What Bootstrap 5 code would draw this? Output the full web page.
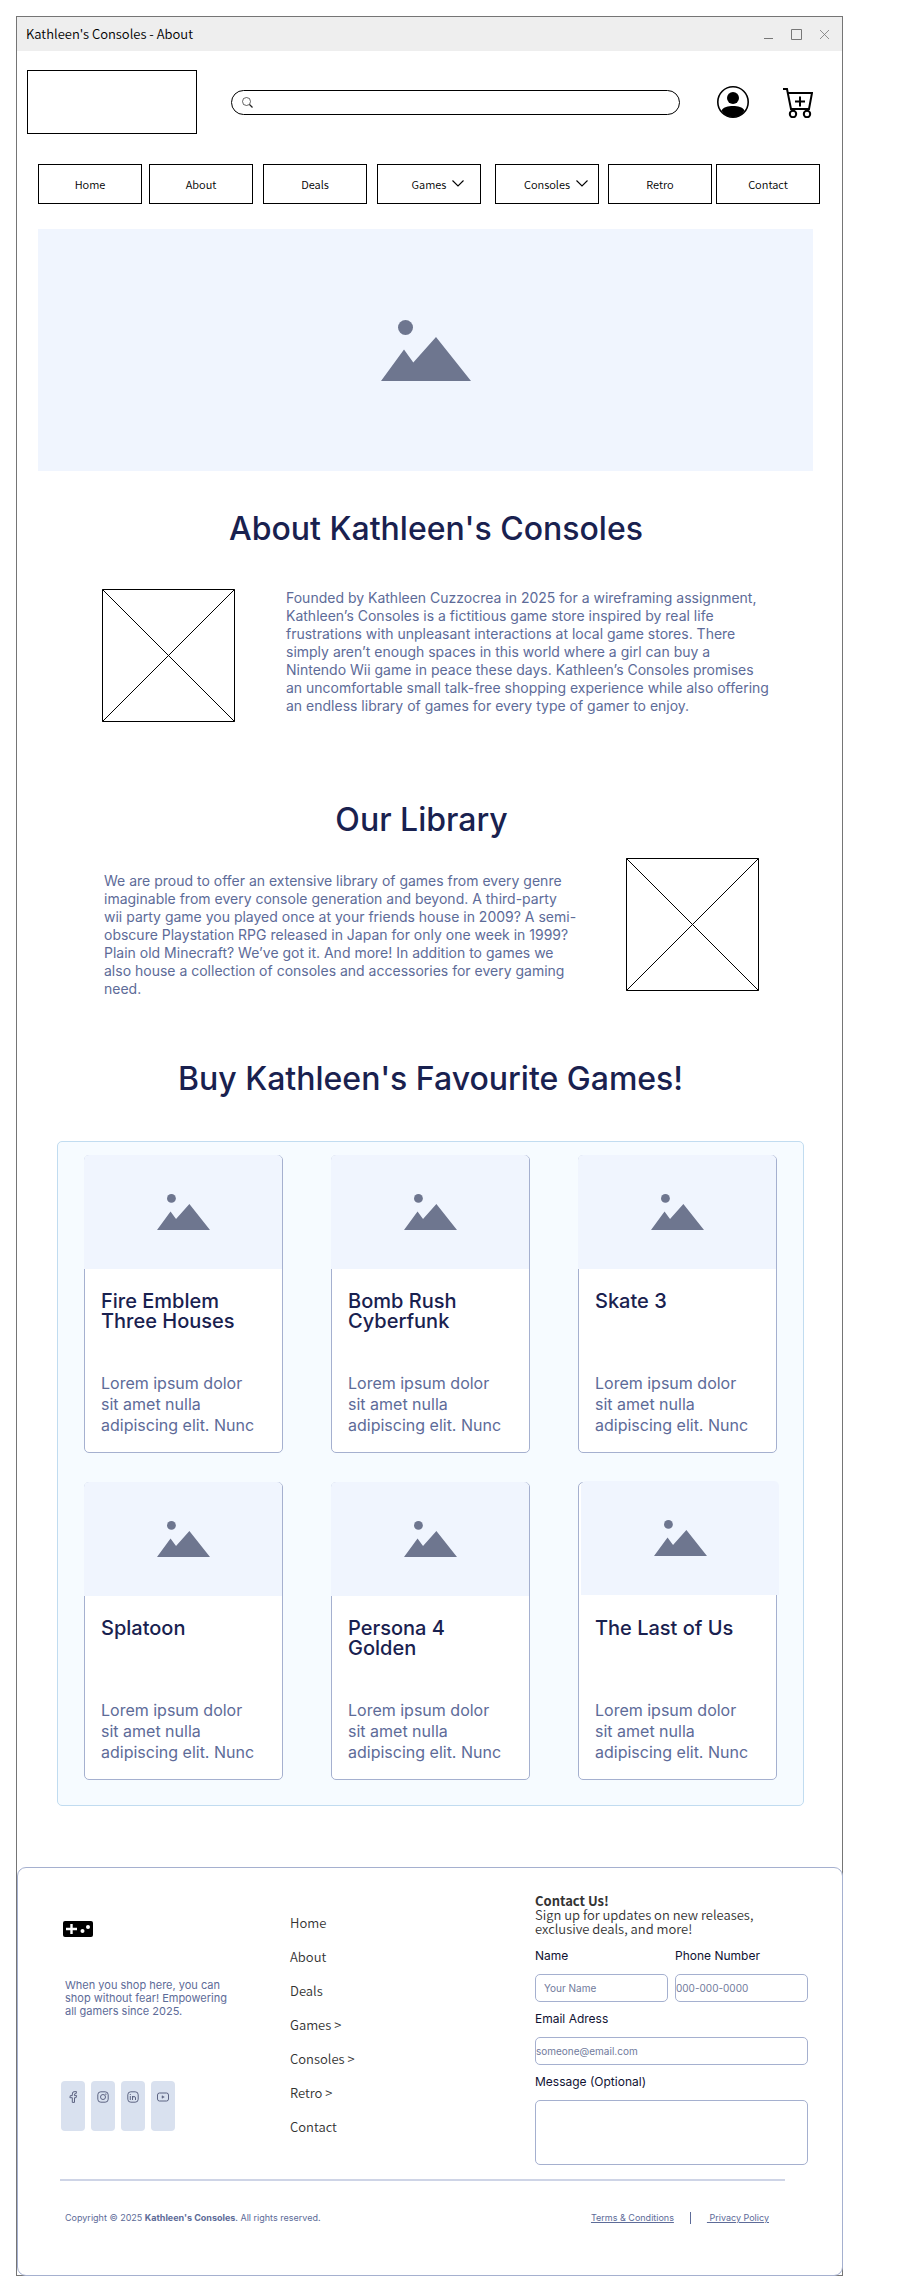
<!DOCTYPE html>
<html lang="en">
<head>
<meta charset="utf-8">
<meta name="viewport" content="width=device-width, initial-scale=1">
<title>Kathleen's Consoles - About</title>
<link rel="stylesheet" href="https://cdn.jsdelivr.net/npm/bootstrap@5.3.0/dist/css/bootstrap.min.css">
<style>
  :root { --navy: #19214f; --slate: #5d6b98; --line: #a5b0cf; --tint: #f0f5fe; }
  body { font-family: Inter, sans-serif; color: var(--slate); background: #fff; padding: 16px 55px 15px 16px; }
  .ui-font { font-family: "Noto Sans CJK JP", sans-serif; font-weight: 350; color: #000; }

  .site-window { border: 1px solid #757575; }
  .title-bar { height: 34px; background: #eee; padding: 0 13px 0 9px; font-size: 13px; line-height: 34px; }
  .window-buttons { gap: 18px; }
  .window-buttons button { line-height: 0; }

  .site-header { padding: 19px 29px 0 10px; }
  .logo-box { width: 170px; height: 64px; border: 1px solid #000; margin-right: 34px; }
  .search-box { height: 25px; border: 1px solid #000; border-radius: 13px; padding: 0 10px; margin-right: 37px; }
  .search-box input { font-size: 12px; outline: 0; margin-left: 6px; }
  .account-link { margin-right: 34px; }

  .main-nav { display: grid; grid-template-columns: 111fr 114fr 114fr 118fr 113fr 108fr 104fr; padding: 30px 22px 0 21px; }
  .main-nav a, .main-nav button { width: 104px; height: 40px; border: 1px solid #000; background: #fff; color: #000; font-size: 11px; font-weight: inherit; line-height: 38px; padding: 0; text-align: center; text-decoration: none; }
  .chevron { left: 100%; top: 50%; margin: -4px 0 0 6px; }

  .hero { height: 242px; margin: 25px 29px 0 21px; background: var(--tint); }
  h2 { color: var(--navy); font-size: 32px; line-height: 38px; font-weight: 500; text-align: center; margin: 0; }
  .prose { font-size: 14px; line-height: 18px; margin: 0; }
  .thumb { width: 133px; height: 133px; }

  .about-section { padding: 39px 59px 0 72px; }
  .about-row { padding: 41px 11px 0 13px; gap: 51px; }
  .library-section { padding: 79px 83px 0 67px; }
  .library-row { padding: 19px 0 0 20px; }
  .library-row .prose { max-width: 474px; margin-top: 14px; }
  .games-section { padding: 62px 38px 0 40px; }
  .games-panel { border: 1px solid #c1dcf0; border-radius: 5px; background: #f6fbff; padding: 13px 26px 25px; margin-top: 43px; }
  .games-panel .row { --bs-gutter-x: 48px; --bs-gutter-y: 29px; }
  .game-card { border: 1px solid var(--line); border-radius: 5px; height: 298px; }
  .game-art { height: 114px; margin: -1px 0 0 -1px; background: var(--tint); border-radius: 5px 5px 0 0; flex: none; }
  .game-art-shifted { margin: -2px -3px 1px 2px; }
  .game-body { padding: 22px 16px 0; }
  .game-body h3 { color: var(--navy); font-size: 20px; line-height: 20px; font-weight: 500; height: 82px; margin: 0; }
  .game-body p { font-size: 16px; line-height: 21px; height: 63px; overflow: hidden; margin: 0; }

  .site-footer { border: 1px solid var(--line); border-radius: 9px; background: #fff; margin: 61px -1px -1px 0; padding: 26px 34px 51px 43px; }
  .footer-grid { display: grid; grid-template-columns: 229fr 245fr 273fr; }
  .pad-logo { margin: 24px 0 0 2px; }
  .tagline { font-size: 11px; line-height: 13px; margin: 39px 0 0 4px; }
  .socials { gap: 6px; margin-top: 63px; }
  .socials a { width: 24px; height: 50px; border-radius: 4px; background: #d9e1ef; padding-top: 10px; text-align: center; line-height: 0; }
  .footer-links { padding-top: 12px; }
  .footer-links a { display: block; font-size: 13px; line-height: 34px; color: #333; text-decoration: none; }
  .contact-intro { color: #333; font-size: 13px; line-height: 14px; margin: 0 0 13px; }
  .contact-form label { display: block; color: #101233; font-size: 12px; line-height: 14px; margin-bottom: 11px; }
  .contact-form .wide-label { margin-top: 10px; }
  .name-row { gap: 7px; }
  .contact-form input, .contact-form textarea { display: block; width: 100%; border: 1px solid var(--line); border-radius: 5px; background: #fff; font-size: 10px; padding: 0; outline: 0; }
  .contact-form input { height: 28px; }
  .contact-form textarea { height: 65px; resize: none; }
  .contact-form ::placeholder { color: #717b9c; opacity: 1; }
  .contact-form .name-input { padding-left: 8px; }
  .footer-rule { height: 2px; border: 0; opacity: 1; background: #ced4e6; margin: 14px 23px 0 -1px; }
  .legal { font-size: 9px; line-height: 12px; padding: 31px 39px 0 4px; }
  .legal a { color: var(--slate); }
  .legal-divider { width: 1px; background: var(--slate); }
</style>
</head>
<body>
<svg width="0" height="0" class="d-none" aria-hidden="true">
  <symbol id="picture" viewBox="0 0 90 61"><circle cx="24.500" cy="7.500" r="7.500" fill="#6e768f"/><path d="M0 61 23 29.500l9.300 13L55 17l35 44z" fill="#6e768f"/></symbol>
  <symbol id="chev" viewBox="0 0 12 7"><path d="M.5.5 6 6 11.500.5" fill="none" stroke="#000" stroke-width="1.100"/></symbol>
</svg>
<div class="site-window">
  <div class="title-bar ui-font d-flex justify-content-between align-items-center">
    <span>Kathleen's Consoles - About</span>
    <div class="window-buttons d-flex align-items-center">
      <button class="btn p-0 border-0" aria-label="Minimize"><svg width="9" height="11" viewBox="0 0 9 11"><path d="M0 9.500h9" stroke="#777"/></svg></button>
      <button class="btn p-0 border-0" aria-label="Maximize"><svg width="11" height="11" viewBox="0 0 11 11"><path d="M.5.5h10v10H.5z" fill="none" stroke="#777"/></svg></button>
      <button class="btn p-0 border-0" aria-label="Close"><svg width="9" height="9" viewBox="0 0 9 9"><path d="m0 0 9 9M9 0 0 9" stroke="#777" stroke-width=".8"/></svg></button>
    </div>
  </div>

  <header class="ui-font">
    <div class="site-header d-flex align-items-center">
      <a href="#" class="logo-box flex-shrink-0" aria-label="Kathleen's Consoles"></a>
      <label class="search-box d-flex align-items-center flex-fill">
        <svg width="11" height="11" viewBox="0 0 11 11" fill="none" stroke="#222"><circle cx="4.500" cy="4.500" r="4" stroke-width=".7"/><path d="m7.500 7.500 3 3" stroke-width="1.200"/></svg>
        <input type="search" class="border-0 p-0 flex-fill bg-transparent" aria-label="Search">
      </label>
      <a href="#" class="account-link lh-1" aria-label="Account"><svg class="d-block" width="32" height="32" viewBox="0 0 32 32"><circle cx="16" cy="16" r="15.200" fill="#fff" stroke="#000" stroke-width="1.600"/><circle cx="16" cy="12" r="6"/><path d="M4.500 24.500C6.500 21 11 20 16 20s9.500 1 11.500 4.500C25 29 21 31 16 31S7 29 4.500 24.500z"/></svg></a>
      <a href="#" class="lh-1" aria-label="Add to cart"><svg class="d-block" width="30" height="32" viewBox="0 0 30 32" fill="none" stroke="#000" stroke-width="2"><path d="M0 3h4l4 20h18l3-16H5M17 10.500v10M12 15.500h10"/><circle cx="10" cy="28" r="3.200"/><circle cx="24" cy="28" r="3.200"/></svg></a>
    </div>
    <nav class="main-nav" aria-label="Main">
      <a href="#">Home</a>
      <a href="#">About</a>
      <a href="#">Deals</a>
      <button type="button"><span class="position-relative">Games<svg class="chevron position-absolute" width="12" height="7"><use href="#chev"/></svg></span></button>
      <button type="button"><span class="position-relative">Consoles<svg class="chevron position-absolute" width="12" height="7"><use href="#chev"/></svg></span></button>
      <a href="#">Retro</a>
      <a href="#">Contact</a>
    </nav>
  </header>

  <main>
    <div class="hero d-flex align-items-center justify-content-center"><svg width="90" height="61"><use href="#picture"/></svg></div>

    <section class="about-section">
      <h2>About Kathleen's Consoles</h2>
      <div class="about-row d-flex align-items-start">
        <svg class="thumb flex-shrink-0" viewBox="0 0 133 133" fill="none" stroke="#000"><path d="M.5.5h132v132H.5zl132 132m0-132L.5 132.500"/></svg>
        <p class="prose">Founded by Kathleen Cuzzocrea in 2025 for a wireframing assignment, Kathleen’s Consoles is a fictitious game store inspired by real life frustrations with unpleasant interactions at local game stores. There simply aren’t enough spaces in this world where a girl can buy a Nintendo Wii game in peace these days. Kathleen’s Consoles promises an uncomfortable small talk-free shopping experience while also offering an endless library of games for every type of gamer to enjoy.</p>
      </div>
    </section>

    <section class="library-section">
      <h2>Our Library</h2>
      <div class="library-row d-flex align-items-start justify-content-between">
        <p class="prose">We are proud to offer an extensive library of games from every genre imaginable from every console generation and beyond. A third-party wii party game you played once at your friends house in 2009? A semi-obscure Playstation RPG released in Japan for only one week in 1999? Plain old Minecraft? We’ve got it. And more! In addition to games we also house a collection of consoles and accessories for every gaming need.</p>
        <svg class="thumb flex-shrink-0" viewBox="0 0 133 133" fill="none" stroke="#000"><path d="M.5.5h132v132H.5zl132 132m0-132L.5 132.500"/></svg>
      </div>
    </section>

    <section class="games-section">
      <h2>Buy Kathleen's Favourite Games!</h2>
      <div class="games-panel">
        <div class="row row-cols-3">
          <div class="col"><article class="game-card card"><div class="game-art d-flex align-items-center justify-content-center"><svg width="53" height="36"><use href="#picture"/></svg></div><div class="game-body"><h3>Fire Emblem Three Houses</h3><p class="pe-2">Lorem ipsum dolor sit amet nulla adipiscing elit. Nunc</p></div></article></div>
          <div class="col"><article class="game-card card"><div class="game-art d-flex align-items-center justify-content-center"><svg width="53" height="36"><use href="#picture"/></svg></div><div class="game-body"><h3>Bomb Rush Cyberfunk</h3><p class="pe-2">Lorem ipsum dolor sit amet nulla adipiscing elit. Nunc</p></div></article></div>
          <div class="col"><article class="game-card card"><div class="game-art d-flex align-items-center justify-content-center"><svg width="53" height="36"><use href="#picture"/></svg></div><div class="game-body"><h3>Skate 3</h3><p class="pe-2">Lorem ipsum dolor sit amet nulla adipiscing elit. Nunc</p></div></article></div>
          <div class="col"><article class="game-card card"><div class="game-art d-flex align-items-center justify-content-center"><svg width="53" height="36"><use href="#picture"/></svg></div><div class="game-body"><h3>Splatoon</h3><p class="pe-2">Lorem ipsum dolor sit amet nulla adipiscing elit. Nunc</p></div></article></div>
          <div class="col"><article class="game-card card"><div class="game-art d-flex align-items-center justify-content-center"><svg width="53" height="36"><use href="#picture"/></svg></div><div class="game-body"><h3>Persona 4 Golden</h3><p class="pe-2">Lorem ipsum dolor sit amet nulla adipiscing elit. Nunc</p></div></article></div>
          <div class="col"><article class="game-card card"><div class="game-art game-art-shifted d-flex align-items-center justify-content-center"><svg width="53" height="36"><use href="#picture"/></svg></div><div class="game-body"><h3>The Last of Us</h3><p class="pe-2">Lorem ipsum dolor sit amet nulla adipiscing elit. Nunc</p></div></article></div>
        </div>
      </div>
    </section>
  </main>

  <footer class="site-footer">
    <div class="footer-grid">
      <div>
        <svg class="pad-logo d-block" width="30" height="22" viewBox="0 0 30 22"><rect y="3" width="30" height="16" rx="2"/><path d="M8.500 6v10M3 11h11" stroke="#fff" stroke-width="2.400"/><circle cx="19.500" cy="13" r="2" fill="#fff"/><circle cx="25" cy="9" r="2" fill="#fff"/></svg>
        <p class="tagline">When you shop here, you can<br>shop without fear! Empowering<br>all gamers since 2025.</p>
        <div class="socials d-flex">
          <a href="#" aria-label="Facebook"><svg width="12" height="12" viewBox="0 0 12 12" fill="none" stroke="#5d6483" stroke-linejoin="round"><path d="M9.500.6H8A2.400 2.400 0 0 0 5.300 3v1.600h-2l-.4 2.100h2.400v4.700h2.200V6.700h1.600l.5-2.100H7.500V3.200q0-.5.600-.5h1z"/></svg></a>
          <a href="#" aria-label="Instagram"><svg width="12" height="12" viewBox="0 0 12 12" fill="none" stroke="#5d6483"><rect x=".8" y=".8" width="10.400" height="10.400" rx="3"/><circle cx="6" cy="6" r="2.500"/><circle cx="8.900" cy="3.100" r=".3"/></svg></a>
          <a href="#" aria-label="LinkedIn"><svg width="12" height="12" viewBox="0 0 12 12" fill="none" stroke="#5d6483"><rect x=".8" y=".8" width="10.400" height="10.400" rx="3"/><path d="M3.300 5v4M3.300 3v1M5.500 9V5M5.500 7q0-1.500 1.500-1.500T8.500 7v2"/></svg></a>
          <a href="#" aria-label="YouTube"><svg width="12" height="12" viewBox="0 0 12 12" fill="none" stroke="#5d6483"><rect x=".5" y="2" width="11" height="8" rx="2"/><path d="M5 4.700v2.600L7.300 6z" fill="#5d6483" stroke-width=".5"/></svg></a>
        </div>
      </div>
      <nav class="footer-links ui-font" aria-label="Footer">
        <a href="#">Home</a><a href="#">About</a><a href="#">Deals</a><a href="#">Games &gt;</a><a href="#">Consoles &gt;</a><a href="#">Retro &gt;</a><a href="#">Contact</a>
      </nav>
      <form class="contact-form">
        <p class="contact-intro ui-font"><strong>Contact Us!</strong><br>Sign up for updates on new releases,<br>exclusive deals, and more!</p>
        <div class="name-row d-flex">
          <div class="w-50"><label for="name">Name</label><input id="name" class="name-input" type="text" placeholder="Your Name"></div>
          <div class="w-50"><label for="phone">Phone Number</label><input id="phone" type="tel" placeholder="000-000-0000"></div>
        </div>
        <label class="wide-label" for="email">Email Adress</label><input id="email" type="email" placeholder="someone@email.com">
        <label class="wide-label" for="message">Message (Optional)</label><textarea id="message"></textarea>
      </form>
    </div>
    <hr class="footer-rule">
    <div class="legal d-flex justify-content-between">
      <span>Copyright © 2025 <strong>Kathleen's Consoles</strong>. All rights reserved.</span>
      <span class="d-flex gap-3"><a href="#">Terms &amp; Conditions</a><span class="legal-divider"></span><a href="#">&nbsp;Privacy Policy</a></span>
    </div>
  </footer>
</div>
<script src="https://cdn.jsdelivr.net/npm/bootstrap@5.3.0/dist/js/bootstrap.bundle.min.js"></script>
</body>
</html>
